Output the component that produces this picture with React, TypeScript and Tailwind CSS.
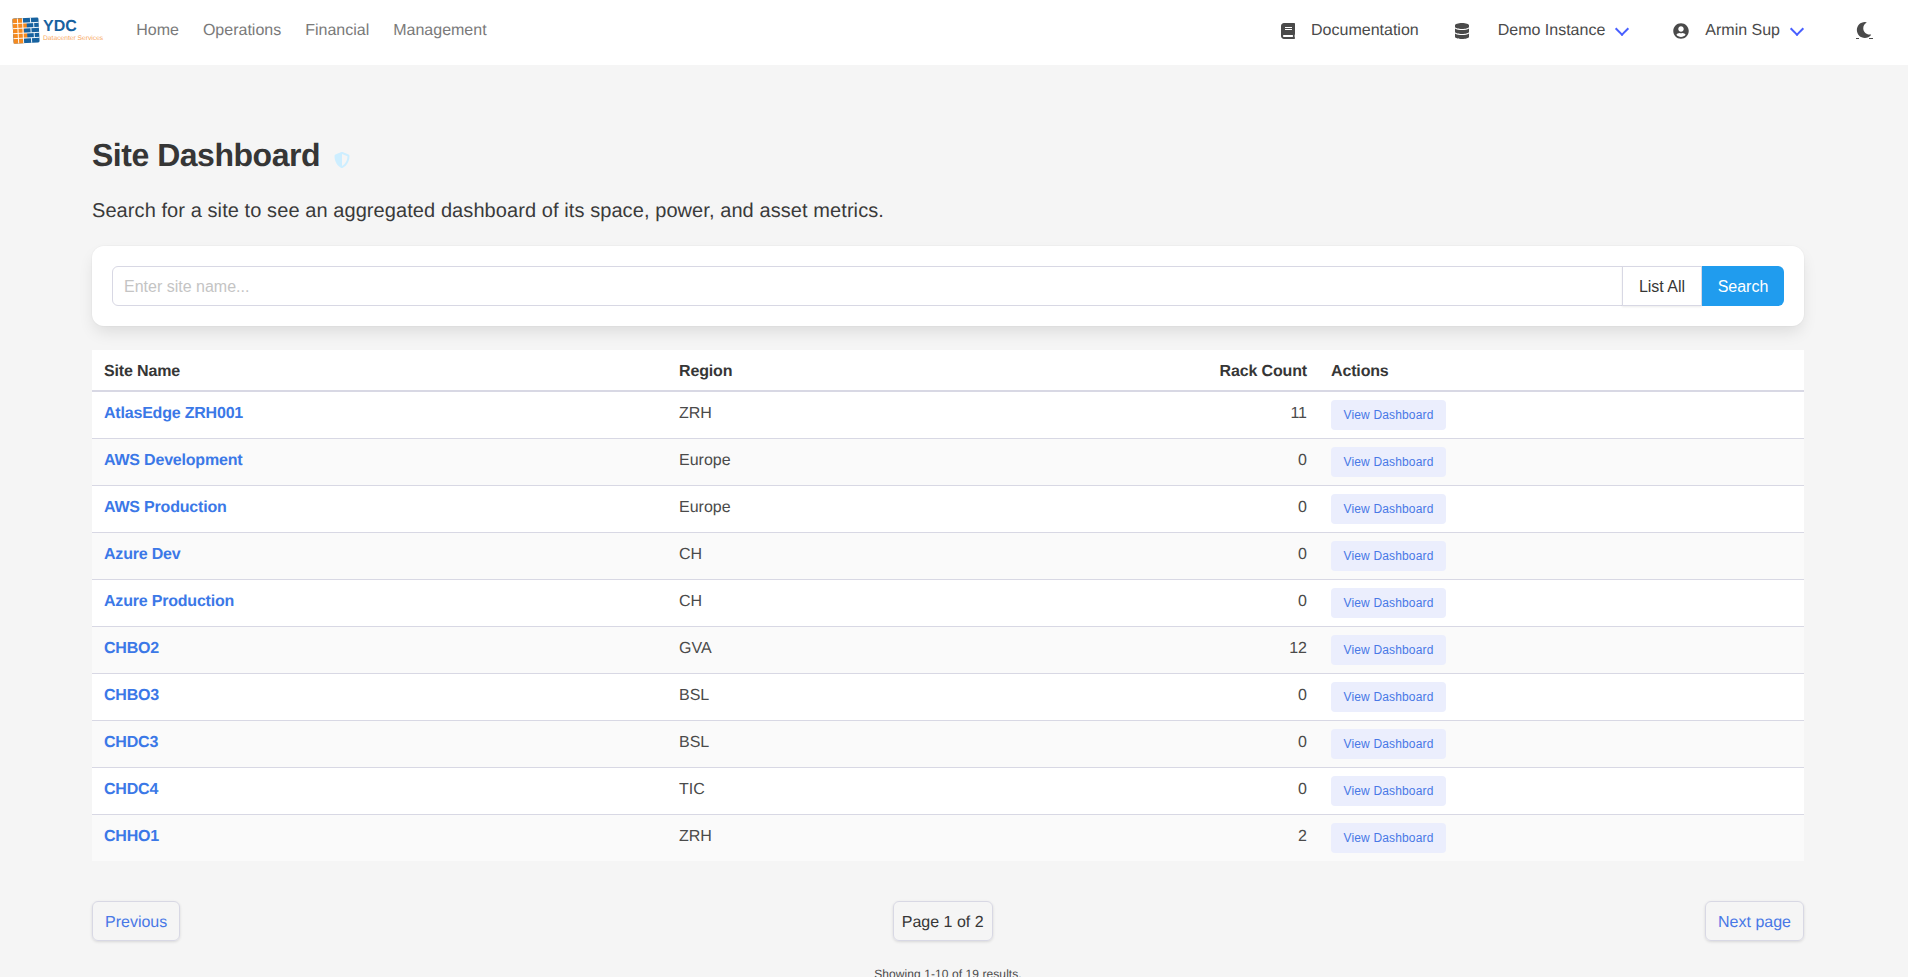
import React from 'react';
import { FaBook, FaDatabase, FaUserCircle, FaMoon, FaShieldAlt } from 'react-icons/fa';

const rows = [
  { name: 'AtlasEdge ZRH001', region: 'ZRH', racks: 11 },
  { name: 'AWS Development', region: 'Europe', racks: 0 },
  { name: 'AWS Production', region: 'Europe', racks: 0 },
  { name: 'Azure Dev', region: 'CH', racks: 0 },
  { name: 'Azure Production', region: 'CH', racks: 0 },
  { name: 'CHBO2', region: 'GVA', racks: 12 },
  { name: 'CHBO3', region: 'BSL', racks: 0 },
  { name: 'CHDC3', region: 'BSL', racks: 0 },
  { name: 'CHDC4', region: 'TIC', racks: 0 },
  { name: 'CHHO1', region: 'ZRH', racks: 2 },
];

function Logo() {
  return (
    <div className="flex items-center gap-[3px]">
      <svg width="28" height="29" viewBox="0 0 28 29">
        <g transform="rotate(-3 14 14)">
          <rect x="1" y="2" width="26" height="25" rx="1.5" fill="#17629f" />
          <path d="M1 2 H11 V7 H15 V12 H12 V17 H15 V22 H11 V27 H1 Z" fill="#f58a1f" />
          <path d="M1 7 H27 M1 12 H27 M1 17 H27 M1 22 H27" stroke="#fff" strokeWidth="0.9" />
          <path d="M6 2 V27 M11 2 V27 M19 2 V7 M22 7 V12 M19 12 V17 M22 17 V22 M19 22 V27" stroke="#fff" strokeWidth="0.9" />
        </g>
      </svg>
      <div className="flex flex-col">
        <span className="text-[16px] leading-[16px] font-bold text-[#17629f]">YDC</span>
        <span className="text-[6.7px] leading-[8px] text-[#f8a860]">Datacenter Services</span>
      </div>
    </div>
  );
}

function Arrow() {
  return <span className="ml-[12px] mt-[-4px] block h-[10px] w-[10px] -rotate-45 border-b-[2px] border-l-[2px] border-[#485fff]" />;
}

export default function App() {
  return (
    <div className="min-h-[977px] overflow-hidden bg-[#f5f5f5] font-['Liberation_Sans',sans-serif] text-[16px] text-[#4a4a4a] [text-rendering:geometricPrecision]">
      <nav className="flex h-[65px] items-center bg-white pb-[4px] pl-[12px] pr-[36px]">
        <Logo />
        <div className="ml-[33px] flex gap-[24px] text-[#7a7a7a]">
          <a>Home</a>
          <a>Operations</a>
          <a>Financial</a>
          <a>Management</a>
        </div>
        <div className="ml-auto flex items-center">
          <FaBook className="h-[16px] w-[14px]" />
          <span className="ml-[16px]">Documentation</span>
          <FaDatabase className="ml-[36px] h-[16px] w-[14px]" />
          <span className="ml-[29px]">Demo Instance</span>
          <Arrow />
          <FaUserCircle className="ml-[46px] h-[16px] w-[16px]" />
          <span className="ml-[16px]">Armin Sup</span>
          <Arrow />
          <span className="ml-[54px] flex w-[16px] flex-col">
            <FaMoon className="h-[16px] w-[16px]" />
            <span className="flex justify-between">
              <span className="h-px w-[3px] bg-[#4a4a4a]" />
              <span className="mr-[-1px] h-px w-[4px] bg-[#4a4a4a]" />
            </span>
          </span>
        </div>
      </nav>

      <main className="pl-[92px] pr-[104px] pt-[70px]">
        <h1 className="flex items-center text-[32px] leading-[40px] font-semibold tracking-[-0.48px] text-[#363636]">
          Site Dashboard
          <FaShieldAlt className="ml-[14px] mt-[10px] h-[16px] w-[16px] text-[#cdeeff]" />
        </h1>
        <p className="mt-[21px] text-[20px] leading-[30px] tracking-[0.08px] text-[#3a3a3a]">
          Search for a site to see an aggregated dashboard of its space, power, and asset metrics.
        </p>

        <div className="mt-[20px] flex rounded-[12px] bg-white p-[20px] shadow-[0_8px_16px_-2px_rgba(10,10,10,0.1),0_0_0_1px_rgba(10,10,10,0.02)]">
          <input
            placeholder="Enter site name..."
            className="h-[40px] grow rounded-l-[6px] border border-[#d8d8e4] px-[11px] pt-[2px] text-[16px] outline-none placeholder:text-[#c4c4c4]"
          />
          <button className="ml-[-1px] h-[40px] w-[80px] border border-[#d8d8e4] bg-white pt-[2px] text-[#363636] shadow-[0_1px_2px_rgba(10,10,10,0.08)]">List All</button>
          <button className="h-[40px] w-[82px] rounded-r-[6px] bg-[#209cee] pt-[2px] text-white">Search</button>
        </div>

        <table className="mt-[24px] w-full table-fixed border-collapse bg-white text-left text-[16px]">
          <thead>
            <tr className="h-[41px] border-b-2 border-[#d8d8e4] tracking-[-0.15px] text-[#363636]">
              <th className="w-[575px] px-[12px] pt-[4px] font-bold">Site Name</th>
              <th className="w-[350px] px-[12px] pt-[4px] font-bold">Region</th>
              <th className="w-[302px] px-[12px] pt-[4px] text-right font-bold">Rack Count</th>
              <th className="px-[12px] pt-[4px] font-bold">Actions</th>
            </tr>
          </thead>
          <tbody>
            {rows.map((r) => (
              <tr key={r.name} className="h-[47px] border-b border-[#d8d8e4] last:border-b-0 even:bg-[#fafafa]">
                <td className="px-[12px] pt-[10px] align-top font-semibold tracking-[-0.2px] text-[#3b78e7]">{r.name}</td>
                <td className="px-[12px] pt-[10px] align-top">{r.region}</td>
                <td className="px-[12px] pt-[10px] text-right align-top">{r.racks}</td>
                <td className="px-[12px] pt-[8px] align-top">
                  <button className="flex h-[30px] w-[115px] items-center justify-center rounded-[4px] bg-[#ebeefd] text-[12px] tracking-[0.15px] text-[#4878e6]">
                    View Dashboard
                  </button>
                </td>
              </tr>
            ))}
          </tbody>
        </table>

        <div className="mt-[40px] flex items-center justify-between">
          <a className="flex h-[40px] items-center rounded-[6px] border border-[#d8d8e4] px-[12px] pt-[3px] text-[#4878e6] shadow-[0_1px_3px_rgba(10,10,10,0.12)]">Previous</a>
          <span className="flex h-[40px] items-center rounded-[6px] border border-[#d8d8e4] px-[8px] pt-[3px] text-[#363636] shadow-[0_1px_3px_rgba(10,10,10,0.12)]">Page 1 of 2</span>
          <a className="flex h-[40px] items-center rounded-[6px] border border-[#d8d8e4] px-[12px] pt-[3px] text-[#4878e6] shadow-[0_1px_3px_rgba(10,10,10,0.12)]">Next page</a>
        </div>
        <p className="mt-[24px] text-center text-[12px] leading-[18px] tracking-[0.08px]">Showing 1-10 of 19 results.</p>
      </main>
    </div>
  );
}
